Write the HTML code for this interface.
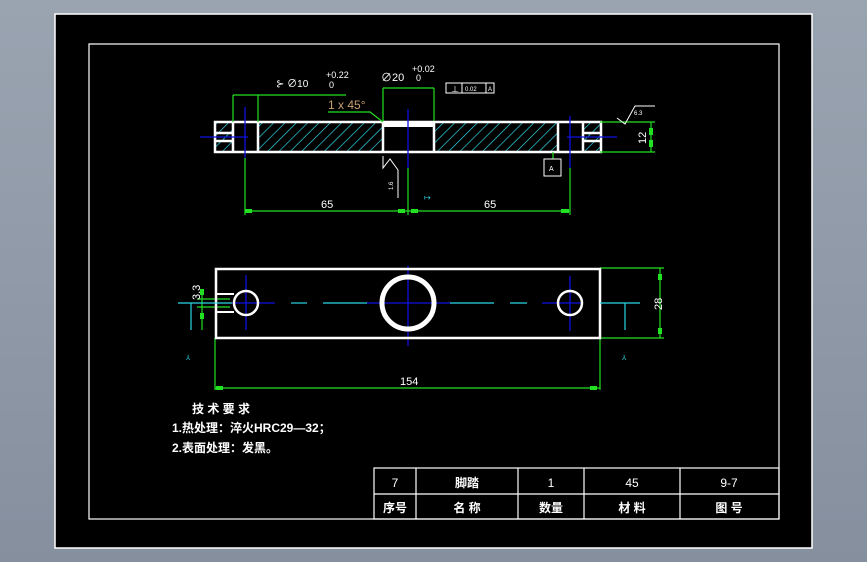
<!DOCTYPE html>
<html><head><meta charset="utf-8"><style>
html,body{margin:0;padding:0;width:867px;height:562px;overflow:hidden;background:linear-gradient(#9aa4b1,#858f9e);}
svg{position:absolute;left:0;top:0}
text{font-family:"Liberation Sans","Noto Sans CJK SC",sans-serif;fill:#fff}
</style></head><body>
<svg width="867" height="562" viewBox="0 0 867 562">
<defs>
<pattern id="h" width="8" height="8" patternUnits="userSpaceOnUse" patternTransform="rotate(45)">
<line x1="0" y1="0" x2="0" y2="8" stroke="#30e8f8" stroke-width="1.3"/></pattern>
</defs>
<rect x="55" y="14" width="757" height="534" fill="#000" stroke="#fff" stroke-width="1.5"/>
<rect x="89" y="44" width="690" height="475" fill="none" stroke="#fff" stroke-width="1.2"/>

<!-- top view -->
<rect x="216" y="123" width="384" height="28" fill="url(#h)"/>
<rect x="233" y="123" width="25" height="28" fill="#000"/>
<rect x="558" y="123" width="25" height="28" fill="#000"/>
<rect x="383" y="123" width="51" height="28" fill="#000"/>
<rect x="215" y="122" width="386" height="30" fill="none" stroke="#fff" stroke-width="2.5"/>
<rect x="383" y="121" width="51" height="6" fill="#fff"/>
<g stroke="#fff" stroke-width="2.5">
<line x1="383" y1="121" x2="383" y2="152"/><line x1="434" y1="121" x2="434" y2="152"/>
<line x1="233" y1="121" x2="233" y2="152"/><line x1="258" y1="121" x2="258" y2="152"/>
<line x1="558" y1="121" x2="558" y2="152"/><line x1="583" y1="121" x2="583" y2="152"/>
<line x1="215" y1="133" x2="233" y2="133"/><line x1="215" y1="141" x2="233" y2="141"/>
<line x1="583" y1="133" x2="601" y2="133"/><line x1="583" y1="141" x2="601" y2="141"/>
</g>
<g stroke="#1010e0" stroke-width="1.3">
<line x1="245" y1="107" x2="245" y2="158"/><line x1="408" y1="109" x2="408" y2="168"/>
<line x1="570" y1="116" x2="570" y2="168"/>
<line x1="200" y1="137" x2="248" y2="137"/><line x1="567" y1="137" x2="617" y2="137"/>
<line x1="408" y1="266" x2="408" y2="346"/><line x1="246" y1="275" x2="246" y2="330"/><line x1="570" y1="276" x2="570" y2="331"/>
<line x1="367" y1="303" x2="450" y2="303"/><line x1="542" y1="303" x2="582" y2="303"/><line x1="232" y1="303" x2="275" y2="303"/>
</g>
<g stroke="#22e022" stroke-width="1.2" fill="none">
<line x1="233" y1="95" x2="346" y2="95"/><line x1="233" y1="95" x2="233" y2="122"/><line x1="258" y1="95" x2="258" y2="122"/>
<line x1="383" y1="88" x2="434" y2="88"/><line x1="383" y1="88" x2="383" y2="121"/><line x1="434" y1="88" x2="434" y2="121"/>
<line x1="245" y1="158" x2="245" y2="215"/><line x1="408" y1="168" x2="408" y2="215"/><line x1="570" y1="168" x2="570" y2="215"/>
<line x1="245" y1="211" x2="570" y2="211"/>
<line x1="600" y1="122" x2="655" y2="122"/><line x1="600" y1="152" x2="655" y2="152"/><line x1="651" y1="122" x2="651" y2="152"/>
<polyline points="328,112 370,112 383,122"/>
<line x1="553" y1="152" x2="553" y2="159"/>
<line x1="600" y1="268" x2="664" y2="268"/><line x1="600" y1="338" x2="664" y2="338"/><line x1="660" y1="268" x2="660" y2="338"/>
<line x1="215" y1="338" x2="215" y2="390"/><line x1="600" y1="338" x2="600" y2="390"/><line x1="215" y1="388" x2="600" y2="388"/>
<line x1="202" y1="290" x2="202" y2="330"/><line x1="197" y1="299" x2="230" y2="299"/><line x1="197" y1="307" x2="230" y2="307"/>
</g>
<g fill="#22e022">
<rect x="245" y="209" width="7" height="4"/><rect x="398" y="209" width="7" height="4"/><rect x="411" y="209" width="7" height="4"/><rect x="561" y="209" width="8" height="4"/>
<rect x="649" y="128" width="4" height="7"/><rect x="649" y="140" width="4" height="7"/>
<rect x="658" y="274" width="4" height="6"/><rect x="658" y="328" width="4" height="6"/>
<rect x="216" y="386" width="7" height="4"/><rect x="590" y="386" width="7" height="4"/>
<rect x="200" y="289" width="4" height="6"/><rect x="200" y="313" width="4" height="6"/>
</g>
<text x="321" y="208" font-size="11">65</text><text x="484" y="208" font-size="11">65</text>
<text x="276" y="87" font-size="10">⊱ ∅10</text><text x="326" y="78" font-size="9">+0.22</text><text x="329" y="88" font-size="9">0</text>
<text x="381" y="81" font-size="11">∅20</text><text x="412" y="72" font-size="9">+0.02</text><text x="416" y="81" font-size="9">0</text>
<rect x="446" y="83" width="48" height="10" fill="none" stroke="#fff"/><line x1="462" y1="83" x2="462" y2="93" stroke="#fff"/><line x1="486" y1="83" x2="486" y2="93" stroke="#fff"/>
<text x="451" y="92" font-size="8">⊥</text><text x="465" y="91" font-size="6">0.02</text><text x="488" y="91" font-size="6">A</text>
<text x="328" y="109" font-size="12" style="fill:#c8a070">1 x 45°</text>
<rect x="544" y="159" width="17" height="17" fill="none" stroke="#fff"/><text x="549" y="171" font-size="7">A</text>
<polyline points="383,156 383,168 390,159 398,170 398,198" fill="none" stroke="#fff"/>
<text x="393" y="190" font-size="6" transform="rotate(-90 393 190)">1.6</text>
<polyline points="617,118 625,124 635,106 655,106" fill="none" stroke="#fff"/><text x="634" y="115" font-size="6">6.3</text>
<text x="424" y="200" font-size="8" style="fill:#2ad6e6">↦</text>
<text x="646" y="144" font-size="11" transform="rotate(-90 646 144)">12</text>

<!-- bottom view -->
<rect x="216" y="269" width="384" height="69" fill="none" stroke="#fff" stroke-width="2.5"/>
<circle cx="408" cy="303" r="26" fill="none" stroke="#fff" stroke-width="5"/>
<circle cx="246" cy="303" r="12" fill="none" stroke="#fff" stroke-width="2.5"/>
<circle cx="570" cy="303" r="12" fill="none" stroke="#fff" stroke-width="2.5"/>
<path d="M216,294 h18 M216,312 h18" stroke="#fff" stroke-width="2"/>
<g stroke="#2ad6e6" stroke-width="1.2">
<line x1="178" y1="303" x2="232" y2="303"/><line x1="291" y1="303" x2="307" y2="303"/><line x1="323" y1="303" x2="367" y2="303"/>
<line x1="450" y1="303" x2="494" y2="303"/><line x1="510" y1="303" x2="527" y2="303"/><line x1="600" y1="303" x2="640" y2="303"/>
<line x1="191" y1="303" x2="191" y2="330"/><line x1="625" y1="303" x2="625" y2="330"/>
</g>
<text x="186" y="360" font-size="7" style="fill:#2ad6e6">⅄</text><text x="622" y="360" font-size="7" style="fill:#2ad6e6">⅄</text>
<text x="400" y="385" font-size="11">154</text>
<text x="662" y="310" font-size="11" transform="rotate(-90 662 310)">28</text>
<text x="200" y="300" font-size="11" transform="rotate(-90 200 300)">3.3</text>

<!-- notes -->
<text x="192" y="413" font-size="12" font-weight="bold">技 术 要 求</text>
<text x="172" y="432" font-size="12" font-weight="bold">1.热处理：淬火HRC29—32；</text>
<text x="172" y="452" font-size="12" font-weight="bold">2.表面处理：发黑。</text>

<!-- title block -->
<g stroke="#fff" stroke-width="1.2" fill="none">
<rect x="374" y="468" width="405" height="51"/><line x1="374" y1="494" x2="779" y2="494"/>
<line x1="416" y1="468" x2="416" y2="519"/><line x1="518" y1="468" x2="518" y2="519"/>
<line x1="584" y1="468" x2="584" y2="519"/><line x1="680" y1="468" x2="680" y2="519"/>
</g>
<g font-size="12" text-anchor="middle">
<text x="395" y="487">7</text><text x="467" y="487" font-weight="bold">脚踏</text><text x="551" y="487">1</text><text x="632" y="487">45</text><text x="729" y="487">9-7</text>
<text x="395" y="512" font-weight="bold">序号</text><text x="467" y="512" font-weight="bold">名 称</text><text x="551" y="512" font-weight="bold">数量</text><text x="632" y="512" font-weight="bold">材 料</text><text x="729" y="512" font-weight="bold">图 号</text>
</g>
</svg>
</body></html>
